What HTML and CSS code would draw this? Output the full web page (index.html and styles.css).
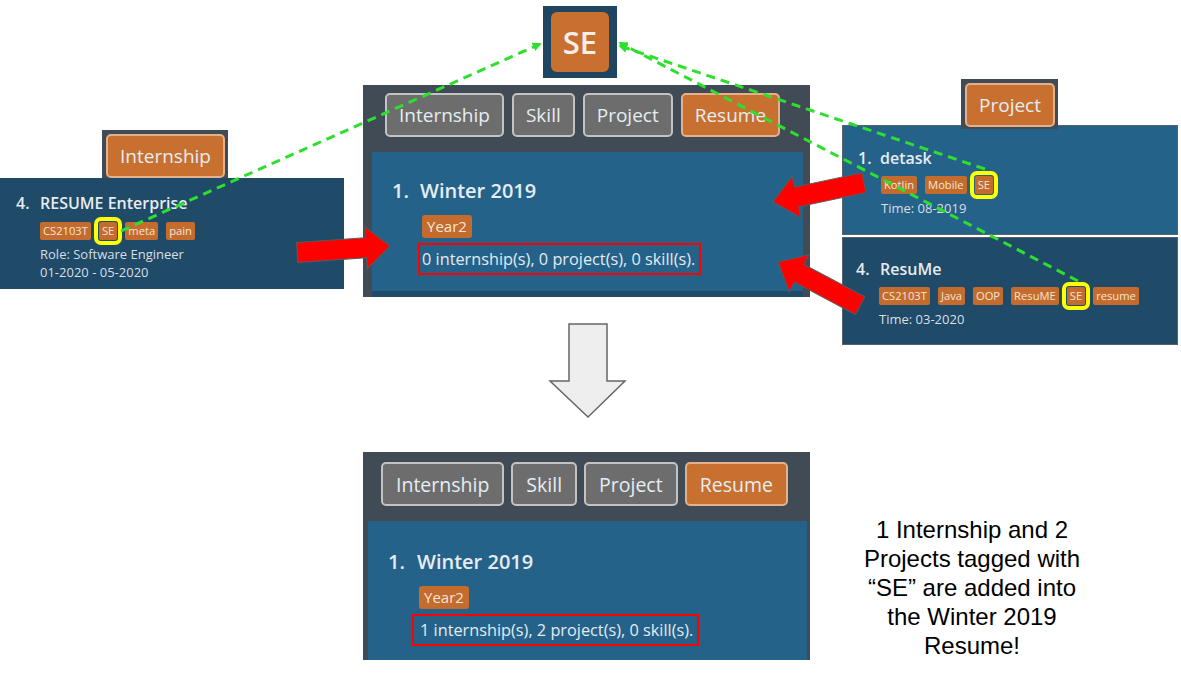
FILE: index.html
```html
<!DOCTYPE html>
<html lang="en">
<head>
<meta charset="utf-8">
<title>Tagging into a resume</title>
<link rel="stylesheet" href="styles.css">
</head>
<body>
<main class="canvas">

  <div class="se-icon"><span class="se-icon__tile">SE</span></div>

  <section class="window window--top">
    <nav class="tabs">
      <span class="btn">Internship</span>
      <span class="btn">Skill</span>
      <span class="btn">Project</span>
      <span class="btn btn--active">Resume</span>
    </nav>
    <div class="list">
      <article class="rcard">
        <h2 class="title title--lg"><span class="idx idx--lg">1.</span>Winter 2019</h2>
        <div class="tags"><span class="tag tag--lg">Year2</span></div>
        <p class="summary">0 internship(s), 0 project(s), 0 skill(s).</p>
      </article>
    </div>
  </section>

  <div class="chip chip--intern"><span class="btn btn--active">Internship</span></div>
  <article class="entry entry--intern">
    <h3 class="title"><span class="idx">4.</span>RESUME Enterprise</h3>
    <div class="tags">
      <span class="tag">CS2103T</span>
      <span class="tag tag--hit">SE</span>
      <span class="tag">meta</span>
      <span class="tag">pain</span>
    </div>
    <p class="meta">Role: Software Engineer</p>
    <p class="meta">01-2020 - 05-2020</p>
  </article>

  <div class="chip chip--project"><span class="btn btn--active">Project</span></div>
  <div class="plist">
    <article class="pcard">
      <h3 class="title"><span class="idx idx--sm">1.</span>detask</h3>
      <div class="tags">
        <span class="tag">Kotlin</span>
        <span class="tag">Mobile</span>
        <span class="tag tag--hit">SE</span>
      </div>
      <p class="meta">Time: 08-2019</p>
    </article>
    <article class="pcard pcard--dark">
      <h3 class="title"><span class="idx">4.</span>ResuMe</h3>
      <div class="tags">
        <span class="tag">CS2103T</span>
        <span class="tag">Java</span>
        <span class="tag">OOP</span>
        <span class="tag">ResuME</span>
        <span class="tag tag--hit">SE</span>
        <span class="tag">resume</span>
      </div>
      <p class="meta">Time: 03-2020</p>
    </article>
  </div>

  <section class="window window--bottom">
    <nav class="tabs">
      <span class="btn">Internship</span>
      <span class="btn">Skill</span>
      <span class="btn">Project</span>
      <span class="btn btn--active">Resume</span>
    </nav>
    <div class="list">
      <article class="rcard">
        <h2 class="title title--lg"><span class="idx idx--lg">1.</span>Winter 2019</h2>
        <div class="tags"><span class="tag tag--lg">Year2</span></div>
        <p class="summary">1 internship(s), 2 project(s), 0 skill(s).</p>
      </article>
    </div>
  </section>

  <p class="note">1 Internship and 2 Projects tagged with “SE” are added into the Winter 2019 Resume!</p>

  <svg class="overlay" width="1181" height="692" viewBox="0 0 1181 692" aria-hidden="true">
    <defs>
      <marker id="gh" viewBox="0 0 10 10" refX="8" refY="5" markerWidth="3" markerHeight="3" orient="auto">
        <path d="M0,0 L10,5 L0,10 z" fill="#2de02d"/>
      </marker>
    </defs>
    <polygon class="down" points="569,324 607,324 607,381 625,381 588,417 550,381 569,381"/>
    <g class="red">
      <polygon transform="translate(390,246) rotate(-4)" points="-93,-10 -24,-10 -24,-21 0,0 -24,21 -24,10 -93,10"/>
      <polygon transform="translate(773,202) rotate(168)" points="-93,-10 -24,-10 -24,-21 0,0 -24,21 -24,10 -93,10"/>
      <polygon transform="translate(778,262) rotate(-152)" points="-93,-10 -24,-10 -24,-21 0,0 -24,21 -24,10 -93,10"/>
    </g>
    <g class="green">
      <line x1="121" y1="231" x2="540" y2="44" marker-end="url(#gh)"/>
      <line x1="985" y1="169" x2="620" y2="46" marker-end="url(#gh)"/>
      <line x1="1078" y1="281" x2="620" y2="43" marker-end="url(#gh)"/>
    </g>
  </svg>
</main>
</body>
</html>
```

FILE: styles.css
```css
* { box-sizing: border-box; margin: 0; padding: 0; }

html, body {
  width: 1181px;
  height: 692px;
  background: #ffffff;
  overflow: hidden;
}

body {
  font-family: "Open Sans", "Noto Sans", sans-serif;
  color: #e4ebf1;
}

.canvas {
  position: relative;
  width: 1181px;
  height: 692px;
}

/* SE icon */
.se-icon {
  position: absolute;
  left: 543px;
  top: 6px;
  width: 74px;
  height: 72px;
  background: #1f4561;
  display: flex;
  align-items: center;
  justify-content: center;
}
.se-icon__tile {
  width: 58px;
  height: 60px;
  border-radius: 6px;
  background: #c8702f;
  color: #f8eee8;
  font-size: 31px;
  font-weight: 600;
  display: flex;
  align-items: center;
  justify-content: center;
}

/* App windows */
.window {
  position: absolute;
  background: #404b55;
  display: flex;
  flex-direction: column;
}
.window--top {
  left: 363px;
  top: 85px;
  width: 447px;
  height: 212px;
  padding-top: 8px;
}
.window--bottom {
  left: 363px;
  top: 452px;
  width: 447px;
  height: 208px;
  padding-top: 10px;
}

.tabs {
  display: flex;
  gap: 8px;
  padding-left: 22px;
}
.window--bottom .tabs {
  padding-left: 18px;
  gap: 7px;
}

.btn {
  height: 44px;
  display: flex;
  align-items: center;
  justify-content: center;
  padding: 0 12px;
  background: #6d6d6d;
  border: 2px solid #c3c3c3;
  border-radius: 5px;
  color: #e6edf3;
  font-size: 19px;
  white-space: nowrap;
}
.window--bottom .btn { padding: 0 13px; font-size: 19.5px; }
.btn--active {
  background: #c8702f;
  border-color: #e3b18c;
}

.list {
  flex: 1;
  margin: 15px 7px 0 9px;
  padding-bottom: 6px;
  background: #1f4a68;
  display: flex;
  flex-direction: column;
}
.window--bottom .list {
  margin: 15px 3px 0 5px;
  padding-bottom: 0;
}

.rcard {
  flex: 1;
  background: #256289;
  padding: 27px 20px 0;
}
.window--bottom .rcard { padding-top: 29px; }

.title {
  font-size: 16px;
  line-height: 20px;
  font-weight: 600;
  color: #e6ecf1;
  white-space: nowrap;
}
.title--lg {
  font-size: 20px;
  line-height: 24px;
}
.idx {
  display: inline-block;
  width: 24px;
}
.idx--sm { width: 22px; }
.idx--lg { width: 28px; }
.window--bottom .idx--lg { width: 29px; }

.tags {
  display: flex;
  gap: 8px;
  margin-top: 9px;
}
.tag {
  height: 18px;
  padding: 0 3px;
  border-radius: 2px;
  background: #c46c2d;
  color: #f4e4d6;
  font-size: 11.2px;
  line-height: 18px;
  white-space: nowrap;
}
.tag--hit {
  outline: 4px solid #ffff00;
  outline-offset: 1px;
}
.rcard .tags {
  margin-top: 12px;
  margin-left: 30px;
}
.window--bottom .rcard .tags { margin-left: 31px; }
.tag--lg {
  height: 23px;
  line-height: 23px;
  font-size: 15px;
  padding: 0 5px;
  border-radius: 3px;
}

.summary {
  display: inline-block;
  margin-top: 5px;
  margin-left: 26px;
  border: 2px solid #ff0000;
  padding: 0 4px 0 2px;
  font-size: 16.3px;
  line-height: 28px;
  color: #e4ebf1;
  white-space: nowrap;
}
.window--bottom .summary { margin-left: 24px; padding-left: 6px; }

.meta {
  font-size: 13px;
  line-height: 18px;
  color: #d7dfe6;
  margin-top: 5px;
}
.meta + .meta { margin-top: 0; }

/* Internship & project panels */
.chip {
  position: absolute;
  background: #404b55;
  padding: 4px 3px 0 4px;
  z-index: 2;
}
.chip--intern {
  left: 102px;
  top: 130px;
  width: 126px;
  height: 48px;
}
.chip--project {
  left: 961px;
  top: 79px;
  width: 97px;
  height: 50px;
}
.chip .btn { width: 100%; }

.entry--intern {
  position: absolute;
  left: 0;
  top: 178px;
  width: 344px;
  height: 111px;
  background: #1f4a68;
  padding: 15px 16px 0;
}
.entry--intern .tags,
.entry--intern .meta { margin-left: 24px; }

.plist {
  position: absolute;
  left: 842px;
  top: 125px;
  width: 336px;
  height: 220px;
  display: flex;
  flex-direction: column;
  gap: 2px;
  background: #ffffff;
}
.pcard {
  height: 110px;
  background: #256289;
  border: 1px solid #56616b;
  padding: 22px 15px 0;
}
.pcard--dark {
  height: 108px;
  background: #1f4a68;
  padding: 21px 13px 0;
}
.pcard .tags,
.pcard .meta { margin-left: 23px; }
.pcard .tags { margin-top: 8px; }

/* Caption */
.note {
  position: absolute;
  left: 852px;
  top: 515px;
  width: 240px;
  font-family: "Liberation Sans", Arial, sans-serif;
  font-size: 24px;
  line-height: 29px;
  color: #000000;
  text-align: center;
}

/* Arrows overlay */
.overlay {
  position: absolute;
  left: 0;
  top: 0;
  z-index: 5;
  pointer-events: none;
}
.down {
  fill: #eeeeee;
  stroke: #666666;
  stroke-width: 1.5;
}
.red polygon {
  fill: #ff0000;
  stroke: #5a5a5a;
  stroke-width: 1;
}
.green line {
  stroke: #2de02d;
  stroke-width: 3;
  stroke-dasharray: 9 6;
}
```
